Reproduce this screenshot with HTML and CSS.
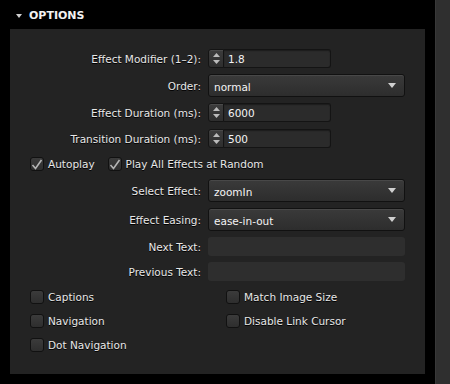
FILE: index.html
```html
<!DOCTYPE html>
<html lang="en">
<head>
    <meta charset="UTF-8">
    <meta name="viewport" content="width=device-width, initial-scale=1.0">
    <title>Options</title>

    <link rel="stylesheet" href="styles.css">

</head>
<body>

    <div id="wrapper">

        <div id="main">

            <div class="section_head">
                <svg class="caret" width="6" height="4" viewBox="0 0 6 4"><path d="M0 0H6L3 4Z" fill="#cfcfcf"/></svg>
                <span>OPTIONS</span>
            </div>

            <div id="panel">

                <div class="row">
                    <label class="label">Effect Modifier (1–2):</label>
                    <div class="number">
                        <span class="spin">
                            <svg width="7" height="4" viewBox="0 0 7 4"><path d="M0 4L3.5 0L7 4Z" fill="#bbb"/></svg>
                            <svg width="7" height="4" viewBox="0 0 7 4"><path d="M0 0H7L3.5 4Z" fill="#bbb"/></svg>
                        </span>
                        <input class="field" type="text" value="1.8">
                    </div>
                </div>

                <div class="row">
                    <label class="label">Order:</label>
                    <div class="select">
                        <span>normal</span>
                        <svg width="8" height="5" viewBox="0 0 8 5"><path d="M0 0H8L4 5Z" fill="#d0d0d0"/></svg>
                    </div>
                </div>

                <div class="row">
                    <label class="label">Effect Duration (ms):</label>
                    <div class="number">
                        <span class="spin">
                            <svg width="7" height="4" viewBox="0 0 7 4"><path d="M0 4L3.5 0L7 4Z" fill="#bbb"/></svg>
                            <svg width="7" height="4" viewBox="0 0 7 4"><path d="M0 0H7L3.5 4Z" fill="#bbb"/></svg>
                        </span>
                        <input class="field" type="text" value="6000">
                    </div>
                </div>

                <div class="row row_loose">
                    <label class="label">Transition Duration (ms):</label>
                    <div class="number">
                        <span class="spin">
                            <svg width="7" height="4" viewBox="0 0 7 4"><path d="M0 4L3.5 0L7 4Z" fill="#bbb"/></svg>
                            <svg width="7" height="4" viewBox="0 0 7 4"><path d="M0 0H7L3.5 4Z" fill="#bbb"/></svg>
                        </span>
                        <input class="field" type="text" value="500">
                    </div>
                </div>

                <div class="checks_inline">
                    <label class="check">
                        <span class="box"><svg width="12" height="11" viewBox="0 0 12 11"><path d="M1.5 6L4.5 9.5L10.5 1" stroke="#b5b5b5" stroke-width="1.6" fill="none"/></svg></span>
                        Autoplay
                    </label>
                    <label class="check">
                        <span class="box"><svg width="12" height="11" viewBox="0 0 12 11"><path d="M1.5 6L4.5 9.5L10.5 1" stroke="#b5b5b5" stroke-width="1.6" fill="none"/></svg></span>
                        Play All Effects at Random
                    </label>
                </div>

                <div class="row row_after_checks">
                    <label class="label">Select Effect:</label>
                    <div class="select">
                        <span>zoomIn</span>
                        <svg width="8" height="5" viewBox="0 0 8 5"><path d="M0 0H8L4 5Z" fill="#d0d0d0"/></svg>
                    </div>
                </div>

                <div class="row">
                    <label class="label">Effect Easing:</label>
                    <div class="select">
                        <span>ease-in-out</span>
                        <svg width="8" height="5" viewBox="0 0 8 5"><path d="M0 0H8L4 5Z" fill="#d0d0d0"/></svg>
                    </div>
                </div>

                <div class="row">
                    <label class="label">Next Text:</label>
                    <input class="text_field" type="text">
                </div>

                <div class="row">
                    <label class="label">Previous Text:</label>
                    <input class="text_field" type="text">
                </div>

                <div class="checks_grid">
                    <label class="check"><span class="box"></span>Captions</label>
                    <label class="check"><span class="box"></span>Match Image Size</label>
                    <label class="check"><span class="box"></span>Navigation</label>
                    <label class="check"><span class="box"></span>Disable Link Cursor</label>
                    <label class="check"><span class="box"></span>Dot Navigation</label>
                </div>

            </div>

        </div>

        <div id="scrollbar"></div>

    </div>

</body>
</html>
```

FILE: styles.css
```css
*{
    font-family: "DejaVu Sans", Verdana, sans-serif;
    box-sizing: border-box;
}

body{
    margin: 0;
    padding: 0;

    width: 450px;
    height: 384px;
    overflow: hidden;

    background-color: #000;
    color: #e8e8e8;
    font-size: 10.5px;
}

#wrapper{
    display: flex;
    height: 100%;
}

#main{
    width: 435px;
}

#scrollbar{
    width: 15px;
    height: 100%;

    background-color: #2f2f2f;
    border-left: 1px solid #383838;
}

.section_head{
    height: 29px;
    padding: 2px 0 0 16px;

    display: flex;
    align-items: center;
    gap: 7px;

    font-family: "Liberation Sans", Arial, sans-serif;
    font-size: 11px;
    font-weight: bold;
    color: #f2f2f2;
}

.caret{
    margin-top: 1px;
}

#panel{
    width: 415px;
    height: 345px;
    margin-left: 10px;
    padding: 20px 20px 0 0;

    background-color: #232323;

    display: flex;
    flex-direction: column;
    gap: 6px;
}

.row{
    display: grid;
    grid-template-columns: 191px auto;
    column-gap: 7px;
    align-items: center;
}

.row_loose{
    margin-top: 1px;
}

.row_after_checks{
    margin-top: 2px;
}

.label{
    text-align: right;
    text-shadow: 0 1px 0 #000;
}

.number{
    display: flex;
    width: 123px;
    height: 19px;
}

.spin{
    width: 16px;
    height: 19px;

    display: flex;
    flex-direction: column;
    align-items: center;
    justify-content: space-around;
    padding: 2px 0;

    background: linear-gradient(#3c3c3c, #2e2e2e);
    border: 1px solid #141414;
    border-radius: 3px 0 0 3px;
    box-shadow: inset 0 1px 0 #4a4a4a;
}

.field{
    width: 107px;
    height: 19px;
    margin: 0;
    padding: 0 4px;

    background-color: #2b2b2b;
    border: 1px solid #141414;
    border-left: none;
    border-radius: 0 3px 3px 0;
    box-shadow: inset 0 1px 1px #1c1c1c;

    color: #f4f4f4;
    font-size: 10.5px;
    outline: none;
}

.select{
    width: 197px;
    height: 23px;
    padding: 0 8px 0 5px;

    display: flex;
    align-items: center;
    justify-content: space-between;

    background: linear-gradient(#3a3a3a, #2d2d2d);
    border: 1px solid #111;
    border-radius: 3px;
    box-shadow: inset 0 1px 0 #484848;

    color: #f4f4f4;
}

.select span{
    padding-top: 2px;
}

.text_field{
    width: 197px;
    height: 19px;
    margin: 0;

    background-color: #2e2e2e;
    border: none;
    border-radius: 3px;
    outline: none;
}

.checks_inline{
    margin-top: 3px;
    padding-left: 20px;

    display: flex;
    gap: 13px;
}

.checks_grid{
    margin-top: 3px;
    padding-left: 20px;

    display: grid;
    grid-template-columns: 196px auto;
    row-gap: 10px;
}

.check{
    height: 14px;

    display: flex;
    align-items: center;
    gap: 4px;

    text-shadow: 0 1px 0 #000;
}

.box{
    width: 14px;
    height: 14px;

    display: flex;
    align-items: center;
    justify-content: center;

    background: linear-gradient(#3b3b3b, #2e2e2e);
    border: 1px solid #111;
    border-radius: 3px;
}
```
